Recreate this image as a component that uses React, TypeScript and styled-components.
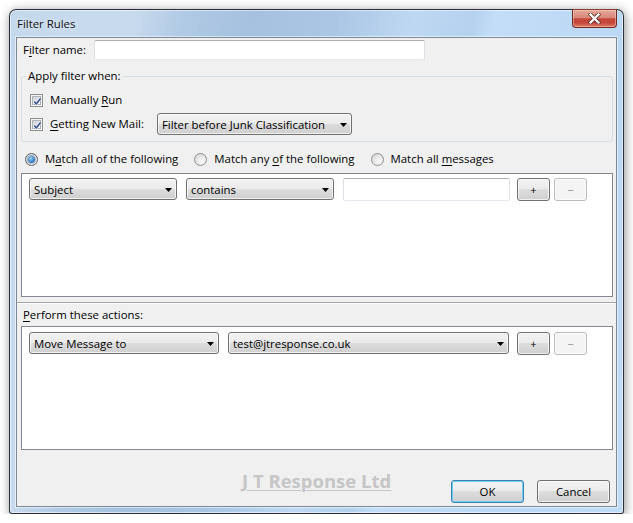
import React from "react";
import styled, { createGlobalStyle } from "styled-components";

const GlobalStyle = createGlobalStyle`
  html, body { margin: 0; padding: 0; background: #ffffff; }
  body {
    font-family: "Open Sans", "Noto Sans", sans-serif;
    font-size: 11.4px;
    line-height: 16px;
    color: #000;
  }
  *, *::before, *::after { box-sizing: border-box; }
  u { text-underline-offset: 2px; }
`;

const Page = styled.div`
  padding: 9px 0 0 9px;
`;

const Window = styled.div`
  width: 615px;
  height: 505px;
  border: 1px solid rgba(28, 34, 42, 0.92);
  border-radius: 7px 7px 3px 3px;
  padding: 0 6px 6px 6px;
  display: flex;
  flex-direction: column;
  background: linear-gradient(
    104deg,
    #c4d8ed 0%,
    #c8dbee 17%,
    #b0c9e4 24%,
    #a5c1df 33%,
    #abc7e5 45%,
    #bfd8f1 55%,
    #b4d1ee 63%,
    #c4ddf6 66%,
    #bad7f4 84%,
    #c0dcf7 100%
  );
  box-shadow: inset 0 0 0 1px rgba(255, 255, 255, 0.55), 1px 2px 11px rgba(0, 0, 0, 0.45);
`;

const TitleBar = styled.div`
  height: 27px;
  flex: none;
  display: flex;
  align-items: flex-start;
  justify-content: space-between;
`;

const Title = styled.div`
  margin: 6px 0 0 1px;
  color: #111;
  text-shadow: 0 0 6px rgba(255, 255, 255, 0.9);
`;

const CloseButton = styled.div`
  margin-top: -1px;
  width: 45px;
  height: 19px;
  border: 1px solid #6e2b22;
  border-top-color: #8a3a30;
  border-radius: 0 0 4px 4px;
  background: linear-gradient(
    to bottom,
    #e6a89b 0%,
    #d98879 45%,
    #c4463a 52%,
    #c4473b 75%,
    #e07c68 100%
  );
  box-shadow: inset 0 0 0 1px rgba(255, 220, 210, 0.45);
  display: flex;
  align-items: center;
  justify-content: center;
`;

const Client = styled.div`
  height: 470px;
  flex: none;
  border: 1px solid #7b8897;
  background: #f0f0f0;
  display: flex;
  flex-direction: column;
  box-shadow: 0 0 0 1px rgba(255, 255, 255, 0.55);
`;

const NameRow = styled.div`
  height: 22px;
  padding: 2px 0 0 6px;
  display: flex;
  align-items: center;
  gap: 7px;
`;

const TextInput = styled.div<{ $w: number; $h: number }>`
  width: ${(p) => p.$w}px;
  height: ${(p) => p.$h}px;
  flex: none;
  background: #fff;
  border: 1px solid #dbdfe6;
  border-top-color: #abadb3;
  border-bottom-color: #e3e9ef;
  border-radius: 2px;
`;

const Group = styled.fieldset`
  margin: 8px 3px 0 4px;
  padding: 0;
  border: 1px solid #d5dfe5;
  border-radius: 3px;
  min-width: 0;
`;

const Legend = styled.legend`
  margin-left: 4px;
  padding: 0 2px;
  line-height: 16px;
`;

const GroupBody = styled.div`
  padding: 5px 0 6px 8px;
  display: flex;
  flex-direction: column;
  gap: 2px;
`;

const CheckRow = styled.div`
  height: 22px;
  display: flex;
  align-items: center;
  gap: 7px;
`;

const CheckBox = styled.span`
  position: relative;
  width: 13px;
  height: 13px;
  flex: none;
  border: 1px solid #8e8f8f;
  background: #f4f4f4;
  padding: 1px;
  display: flex;
`;

const CheckInner = styled.span`
  flex: 1;
  border: 1px solid #aeb3b9;
  background: linear-gradient(135deg, #cdd1d7 0%, #e4e6e9 55%, #f7f7f7 100%);
`;

const Tick = styled.svg`
  position: absolute;
  left: 1px;
  top: 1px;
`;

const Spaced = styled.span<{ $ml: number }>`
  margin-left: ${(p) => p.$ml}px;
  display: flex;
`;

const Select = styled.div<{ $w: number }>`
  width: ${(p) => p.$w}px;
  height: 22px;
  flex: none;
  border: 1px solid #707070;
  border-radius: 3px;
  background: linear-gradient(to bottom, #f2f2f2 0%, #ebebeb 49%, #dddddd 50%, #cfcfcf 100%);
  box-shadow: inset 0 0 0 1px rgba(255, 255, 255, 0.7);
  display: flex;
  align-items: center;
  justify-content: space-between;
  padding: 1px 4px 0 4px;
  white-space: nowrap;
  overflow: hidden;
`;

const RadioRow = styled.div`
  height: 18px;
  margin-top: 8px;
  padding-left: 8px;
  display: flex;
  align-items: center;
`;

const RadioItem = styled.div`
  display: flex;
  align-items: center;
  gap: 7px;
  margin-right: 16px;
`;

const Radio = styled.span<{ $on?: boolean }>`
  width: 13px;
  height: 13px;
  flex: none;
  border-radius: 50%;
  border: 1px solid ${(p) => (p.$on ? "#5a5e63" : "#8e8f8f")};
  background: radial-gradient(circle at 65% 70%, #fbfbfb 0%, #e8e8e8 45%, #cfd1d4 100%);
  display: flex;
  align-items: center;
  justify-content: center;
`;

const RadioDot = styled.span`
  width: 7px;
  height: 7px;
  border-radius: 50%;
  background: radial-gradient(circle at 40% 35%, #a9d6f7 0%, #4b8fd0 45%, #1f5593 100%);
  box-shadow: 0 0 0 1px rgba(40, 80, 130, 0.35);
`;

const ListBox = styled.div<{ $top: number; $mt: number }>`
  height: 124px;
  flex: none;
  margin: ${(p) => p.$mt}px 3px 0 4px;
  border: 1px solid #828790;
  background: #fff;
  padding: ${(p) => p.$top}px 0 0 7px;
`;

const RuleRow = styled.div`
  display: flex;
  align-items: flex-start;
`;

const Gap = styled.span<{ $w: number }>`
  width: ${(p) => p.$w}px;
  flex: none;
`;

const SmallButton = styled.div<{ $disabled?: boolean }>`
  width: 33px;
  height: 23px;
  flex: none;
  border: 1px solid ${(p) => (p.$disabled ? "#b8bcbf" : "#707070")};
  border-radius: 3px;
  background: ${(p) =>
    p.$disabled
      ? "#f4f4f4"
      : "linear-gradient(to bottom, #f2f2f2 0%, #ebebeb 49%, #dddddd 50%, #cfcfcf 100%)"};
  box-shadow: inset 0 0 0 1px rgba(255, 255, 255, 0.7);
  color: ${(p) => (p.$disabled ? "#8a8a8a" : "#000")};
  display: flex;
  align-items: center;
  justify-content: center;
  font-size: 11px;
`;

const Splitter = styled.div`
  flex: none;
  margin-top: 5px;
  height: 2px;
  border-top: 1px solid #a3a3a3;
  border-bottom: 1px solid #fdfdfd;
`;

const SectionLabel = styled.div`
  margin-top: 3px;
  padding-left: 6px;
  height: 16px;
`;

const Footer = styled.div`
  flex: 1;
  padding: 21px 6px 0 0;
  display: flex;
  align-items: flex-start;
`;

const Watermark = styled.div`
  margin-left: 225px;
  font-size: 18.5px;
  font-weight: 700;
  line-height: 20px;
  color: #c6c6c6;
  text-decoration: underline;
  text-decoration-thickness: 1px;
  text-underline-offset: 2px;
`;

const ButtonBar = styled.div`
  margin-left: auto;
  margin-top: 9px;
  display: flex;
  gap: 13px;
`;

const DialogButton = styled.div<{ $default?: boolean }>`
  width: 73px;
  height: 23px;
  border: 1px solid ${(p) => (p.$default ? "#3c7fb1" : "#707070")};
  border-radius: 3px;
  background: linear-gradient(to bottom, #f2f2f2 0%, #ebebeb 49%, #dddddd 50%, #cfcfcf 100%);
  box-shadow: inset 0 0 0 1px ${(p) => (p.$default ? "#6fd0f5" : "rgba(255,255,255,0.7)")};
  display: flex;
  align-items: center;
  justify-content: center;
`;

const Arrow = () => (
  <svg width="7" height="4" viewBox="0 0 7 4">
    <path d="M0 0 H7 L3.5 4 Z" fill="#000" />
  </svg>
);

const Check = () => (
  <CheckBox>
    <CheckInner />
    <Tick width="11" height="11" viewBox="0 0 11 11">
      <path d="M2.3 5.6 L4.4 7.8 L8.6 2.4" fill="none" stroke="#fff" strokeWidth="3" strokeLinejoin="round" opacity="0.6" />
      <path d="M2.3 5.6 L4.4 7.8 L8.6 2.4" fill="none" stroke="#3f5796" strokeWidth="1.7" />
    </Tick>
  </CheckBox>
);

const Dropdown = ({ w, children }: { w: number; children: React.ReactNode }) => (
  <Select $w={w}>
    <span>{children}</span>
    <Arrow />
  </Select>
);

export default function App() {
  return (
    <>
      <GlobalStyle />
      <Page>
        <Window>
          <TitleBar>
            <Title>Filter Rules</Title>
            <CloseButton>
              <svg width="13" height="11" viewBox="0 0 13 11">
                <path d="M2.5 1.5 L10.5 9.5 M10.5 1.5 L2.5 9.5" stroke="#4a2a26" strokeWidth="4" strokeLinecap="square" opacity="0.75" />
                <path d="M2.5 1.5 L10.5 9.5 M10.5 1.5 L2.5 9.5" stroke="#ffffff" strokeWidth="2.2" strokeLinecap="square" />
              </svg>
            </CloseButton>
          </TitleBar>
          <Client>
            <NameRow>
              <span>
                F<u>i</u>lter name:
              </span>
              <Spaced $ml={1}>
                <TextInput $w={331} $h={20} />
              </Spaced>
            </NameRow>

            <Group>
              <Legend>Apply filter when:</Legend>
              <GroupBody>
                <CheckRow>
                  <Check />
                  <span>
                    Manually <u>R</u>un
                  </span>
                </CheckRow>
                <CheckRow>
                  <Check />
                  <span>
                    <u>G</u>etting New Mail:
                  </span>
                  <Spaced $ml={6}>
                    <Dropdown w={195}>Filter before Junk Classification</Dropdown>
                  </Spaced>
                </CheckRow>
              </GroupBody>
            </Group>

            <RadioRow>
              <RadioItem>
                <Radio $on>
                  <RadioDot />
                </Radio>
                <span>
                  M<u>a</u>tch all of the following
                </span>
              </RadioItem>
              <RadioItem>
                <Radio />
                <span>
                  Match any <u>o</u>f the following
                </span>
              </RadioItem>
              <RadioItem>
                <Radio />
                <span>
                  Match all <u>m</u>essages
                </span>
              </RadioItem>
            </RadioRow>

            <ListBox $top={4} $mt={5}>
              <RuleRow>
                <Dropdown w={148}>Subject</Dropdown>
                <Gap $w={9} />
                <Dropdown w={148}>contains</Dropdown>
                <Gap $w={9} />
                <TextInput $w={167} $h={23} />
                <Gap $w={7} />
                <SmallButton>+</SmallButton>
                <Gap $w={4} />
                <SmallButton $disabled>−</SmallButton>
              </RuleRow>
            </ListBox>

            <Splitter />

            <SectionLabel>
              <u>P</u>erform these actions:
            </SectionLabel>

            <ListBox $top={5} $mt={3}>
              <RuleRow>
                <Dropdown w={190}>Move Message to</Dropdown>
                <Gap $w={9} />
                <Dropdown w={281}>test@jtresponse.co.uk</Dropdown>
                <Gap $w={8} />
                <SmallButton>+</SmallButton>
                <Gap $w={4} />
                <SmallButton $disabled>−</SmallButton>
              </RuleRow>
            </ListBox>

            <Footer>
              <Watermark>J T Response Ltd</Watermark>
              <ButtonBar>
                <DialogButton $default>OK</DialogButton>
                <DialogButton>Cancel</DialogButton>
              </ButtonBar>
            </Footer>
          </Client>
        </Window>
      </Page>
    </>
  );
}
